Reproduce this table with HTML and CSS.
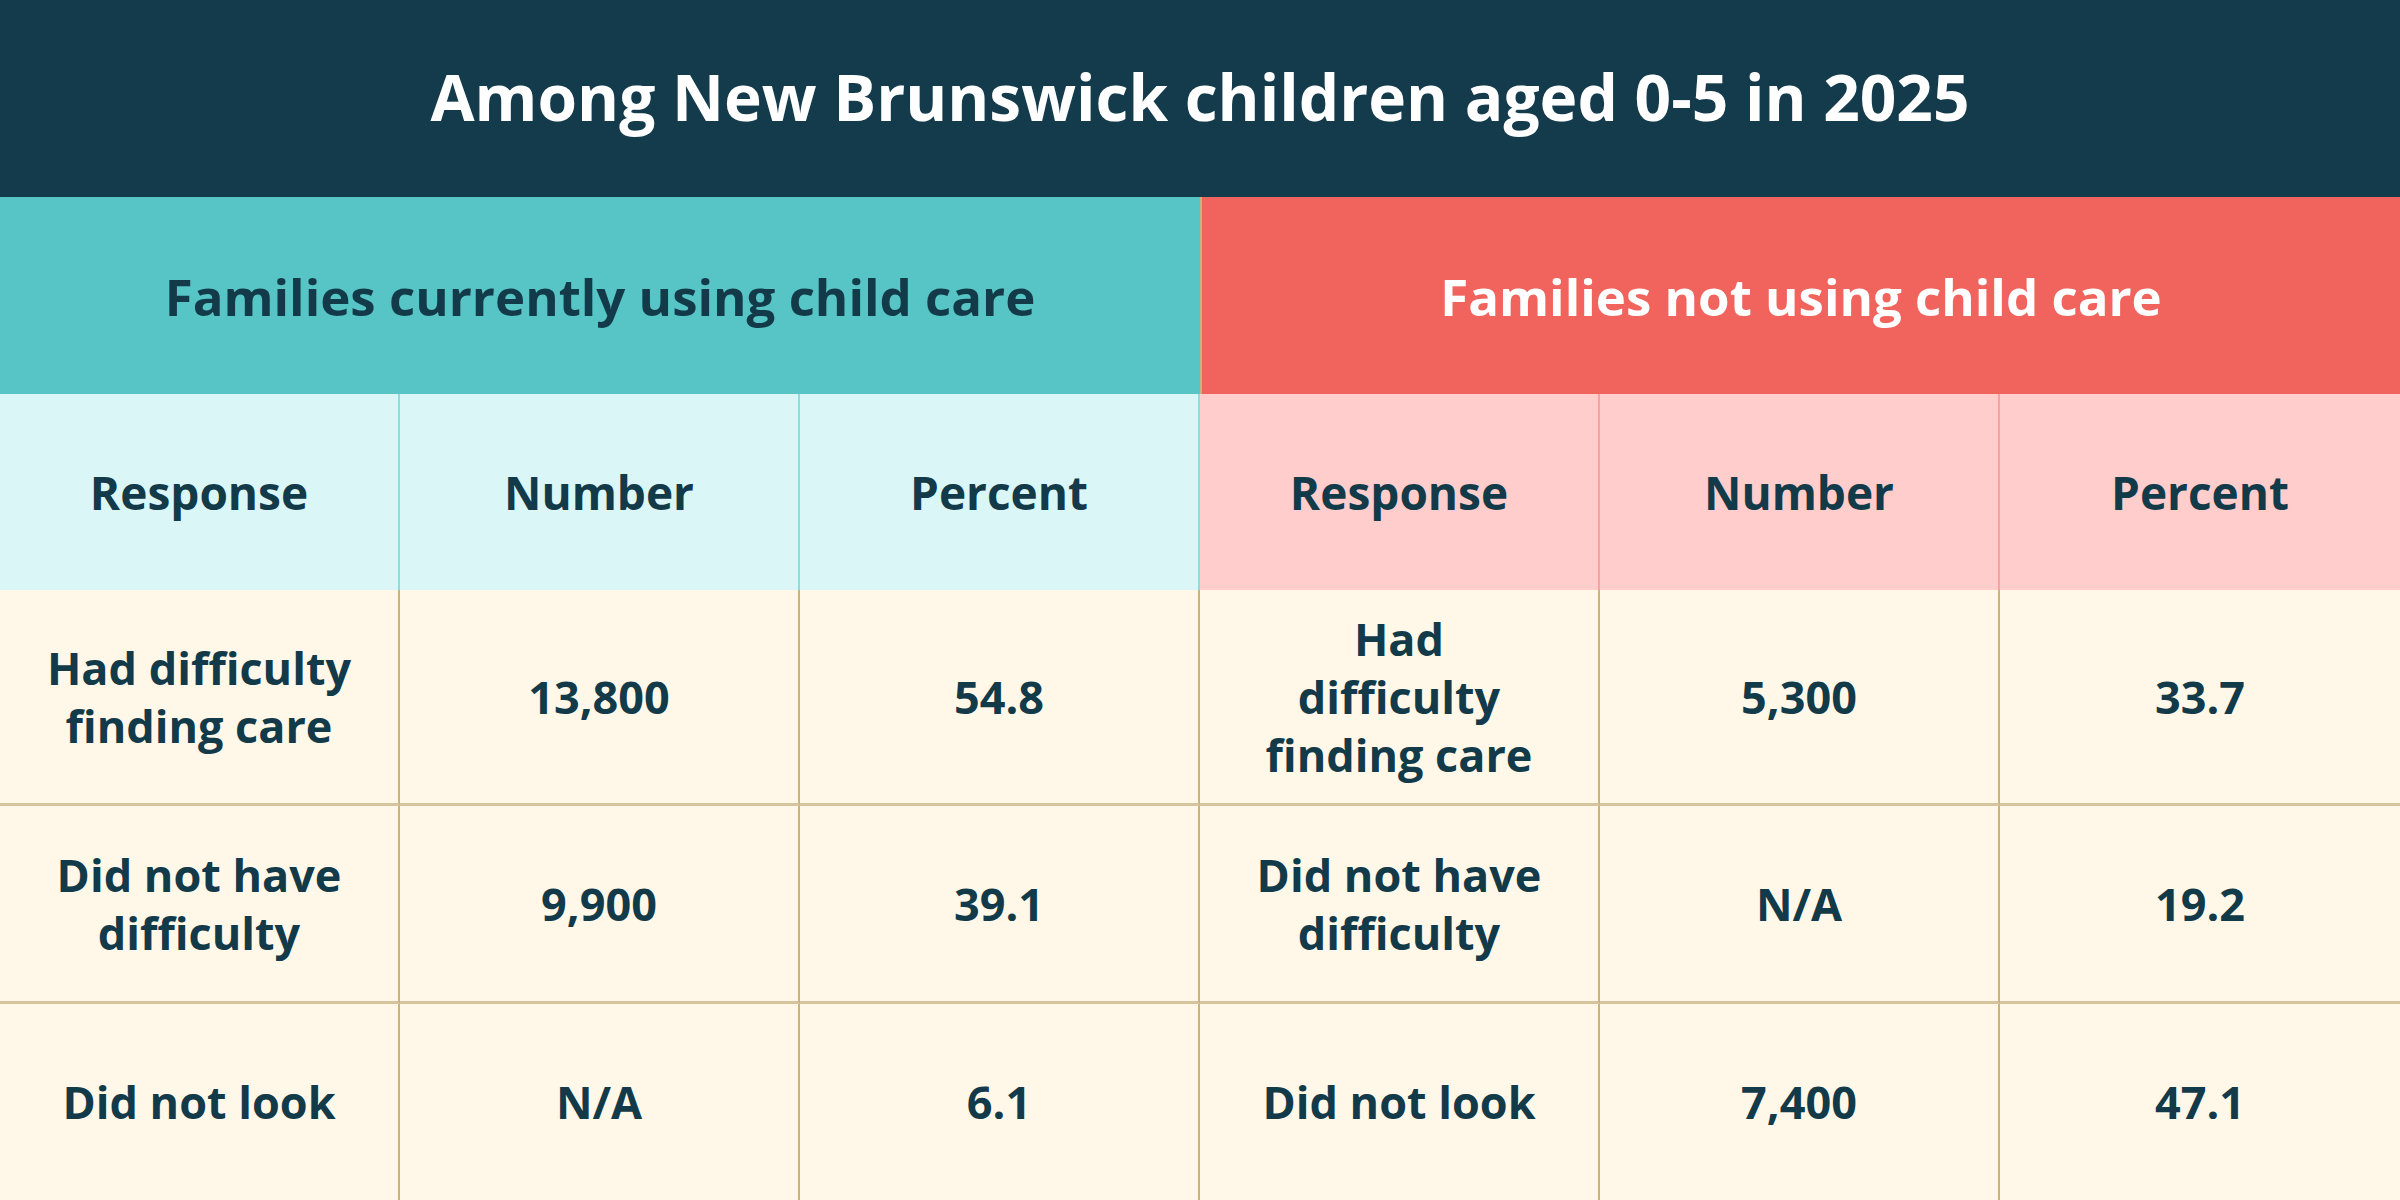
FILE: index.html
```html
<!DOCTYPE html>
<html lang="en">
<head>
<meta charset="utf-8">
<title>Among New Brunswick children aged 0-5 in 2025</title>
<link rel="stylesheet" href="styles.css">
</head>
<body>
<div class="sheet">
  <div class="title">Among New Brunswick children aged 0-5 in 2025</div>
  <div class="group group-using">Families currently using child care</div>
  <div class="group group-not">Families not using child care</div>

  <div class="head head-using">Response</div>
  <div class="head head-using">Number</div>
  <div class="head head-using">Percent</div>
  <div class="head head-not">Response</div>
  <div class="head head-not">Number</div>
  <div class="head head-not head-end">Percent</div>

  <div class="cell">Had difficulty<br>finding care</div>
  <div class="cell">13,800</div>
  <div class="cell">54.8</div>
  <div class="cell">Had<br>difficulty<br>finding care</div>
  <div class="cell">5,300</div>
  <div class="cell last">33.7</div>

  <div class="cell">Did not have<br>difficulty</div>
  <div class="cell">9,900</div>
  <div class="cell">39.1</div>
  <div class="cell">Did not have<br>difficulty</div>
  <div class="cell">N/A</div>
  <div class="cell last">19.2</div>

  <div class="cell bottom">Did not look</div>
  <div class="cell bottom">N/A</div>
  <div class="cell bottom">6.1</div>
  <div class="cell bottom">Did not look</div>
  <div class="cell bottom">7,400</div>
  <div class="cell bottom last">47.1</div>
</div>
</body>
</html>
```

FILE: styles.css
```css
* { box-sizing: border-box; }

html, body {
  margin: 0;
  padding: 0;
  background: #fff8e9;
}

body {
  font-family: "Open Sans", "Liberation Sans", sans-serif;
  font-weight: 700;
  color: #133a49;
}

.sheet {
  width: 2400px;
  height: 1200px;
  display: grid;
  grid-template-columns: repeat(6, 400px);
  grid-template-rows: 197px 197px 196px 216px 198px 196px;
}

.title,
.group,
.head,
.cell {
  display: flex;
  align-items: center;
  justify-content: center;
  text-align: center;
}

.title {
  grid-column: 1 / -1;
  background: #133b4b;
  color: #ffffff;
  font-size: 64px;
  padding-bottom: 4px;
}

.group {
  grid-column: span 3;
  font-size: 51px;
}

.group-using {
  background: #57c4c5;
  color: #133a49;
}

.group-not {
  background: #f1645e;
  color: #ffffff;
  border-left: 2px solid #c9b07d;
}

.head {
  font-size: 46px;
}

.head-using {
  background: #dbf6f7;
  border-right: 2px solid #8fdcdd;
}

.head-not {
  background: #ffcdcc;
  border-right: 2px solid #f7a3a3;
}

.head-end {
  border-right: none;
}

.cell {
  background: #fff8e9;
  font-size: 45px;
  line-height: 58px;
  border-right: 2px solid #cbb280;
  border-bottom: 3px solid #d6c49c;
}

.cell.last {
  border-right: none;
}

.cell.bottom {
  border-bottom: none;
}
```
